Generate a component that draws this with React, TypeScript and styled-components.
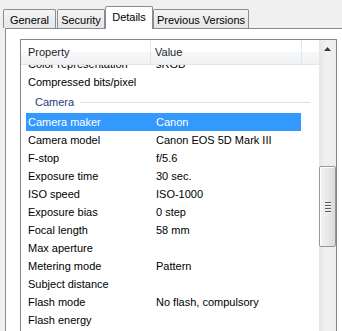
import React from 'react';
import styled, { createGlobalStyle } from 'styled-components';

const Global = createGlobalStyle`
  html, body { margin: 0; padding: 0; background: #f0f0f0; overflow: hidden; }
  body { font-family: "Liberation Sans", Arial, sans-serif; font-size: 11px; color: #000; }
`;

const Window = styled.div`
  width: 342px;
  height: 331px;
  overflow: hidden;
  display: flex;
  flex-direction: column;
`;

const TabStrip = styled.div`
  display: flex;
  align-items: flex-end;
  height: 28px;
  padding-left: 3px;
  position: relative;
  z-index: 1;
`;

const Tab = styled.div<{ $w: number; $active?: boolean }>`
  box-sizing: border-box;
  width: ${(p) => p.$w}px;
  height: ${(p) => (p.$active ? 23 : 19)}px;
  margin-left: ${(p) => (p.$active ? -1 : 0)}px;
  margin-right: ${(p) => (p.$active ? 0 : 1)}px;
  margin-bottom: ${(p) => (p.$active ? -1 : 0)}px;
  border: 1px solid #898c95;
  border-bottom: none;
  border-radius: 2px 2px 0 0;
  background: ${(p) => (p.$active ? '#ffffff' : 'linear-gradient(#f4f4f4, #e6e6e6)')};
  display: flex;
  align-items: center;
  justify-content: center;
  padding-top: ${(p) => (p.$active ? 0 : 1)}px;
  padding-bottom: ${(p) => (p.$active ? 3 : 0)}px;
  color: #000;
  white-space: nowrap;
`;

const Panel = styled.div`
  flex: 1;
  margin-left: 5px;
  border-top: 1px solid #898c95;
  border-left: 1px solid #898c95;
  background: #ffffff;
  padding: 10px 0 0 14px;
  display: flex;
  min-height: 0;
`;

const ListBox = styled.div`
  box-sizing: border-box;
  width: 317px;
  border: 1px solid #828790;
  border-bottom: none;
  background: #fff;
  display: flex;
  min-height: 0;
`;

const Content = styled.div`
  flex: 1;
  display: flex;
  flex-direction: column;
  min-width: 0;
`;

const Header = styled.div`
  display: flex;
  height: 24px;
  border-bottom: 1px solid #e5e5e5;
  background: linear-gradient(#ffffff 0%, #ffffff 50%, #f7f8fa 51%, #f1f2f4 100%);
`;

const HeadCell = styled.div<{ $w?: number; $pad?: number }>`
  box-sizing: border-box;
  ${(p) => (p.$w ? `width: ${p.$w}px;` : 'flex: 1;')}
  padding-left: ${(p) => p.$pad ?? 0}px;
  border-right: ${(p) => (p.$w ? '1px solid #e3e6ea' : 'none')};
  display: flex;
  align-items: center;
  color: #1e1e1e;
`;

const Body = styled.div`
  flex: 1;
  overflow: hidden;
`;

const Scrolled = styled.div<{ $offset: number }>`
  margin-top: ${(p) => -p.$offset}px;
  display: flex;
  flex-direction: column;
`;

const Row = styled.div<{ $selected?: boolean }>`
  display: flex;
  height: 18px;
  margin-left: 5px;
  width: 275px;
  align-items: center;
  background: ${(p) => (p.$selected ? '#3399ff' : 'transparent')};
  color: ${(p) => (p.$selected ? '#ffffff' : '#000000')};
  white-space: nowrap;
`;

const NameCell = styled.div`
  width: 125px;
  padding-left: 2px;
  box-sizing: border-box;
`;

const ValueCell = styled.div`
  flex: 1;
  padding-left: 5px;
`;

const Group = styled.div`
  height: 22px;
  display: flex;
  align-items: center;
  padding-left: 14px;
  padding-right: 9px;
  gap: 6px;
  color: #1e3a80;
`;

const GroupLine = styled.div`
  flex: 1;
  height: 1px;
  background: #dcdfe4;
  margin-top: 1px;
`;

const ScrollBar = styled.div`
  width: 17px;
  display: flex;
  flex-direction: column;
  background: linear-gradient(90deg, #e6e6e6, #f1f1f1 40%, #ececec);
`;

const ArrowButton = styled.div`
  height: 17px;
  display: flex;
  align-items: center;
  justify-content: center;
`;

const TrackGap = styled.div<{ $h: number }>`
  height: ${(p) => p.$h}px;
`;

const Thumb = styled.div`
  box-sizing: border-box;
  height: 81px;
  border: 1px solid #979797;
  border-radius: 2px;
  background: linear-gradient(90deg, #f3f3f3, #e9e9e9 50%, #d9d9d9);
  box-shadow: inset 1px 1px 0 #fff;
  display: flex;
  align-items: center;
  justify-content: center;
`;

const Grip = styled.div`
  display: flex;
  flex-direction: column;
  gap: 2px;
`;

const GripLine = styled.div`
  width: 6px;
  height: 1px;
  background: #5a5a5a;
  box-shadow: 0 1px 0 #f5f5f5;
`;

type Item = { name: string; value?: string; selected?: boolean };

const before: Item[] = [
  { name: 'Color representation', value: 'sRGB' },
  { name: 'Compressed bits/pixel' },
];

const camera: Item[] = [
  { name: 'Camera maker', value: 'Canon', selected: true },
  { name: 'Camera model', value: 'Canon EOS 5D Mark III' },
  { name: 'F-stop', value: 'f/5.6' },
  { name: 'Exposure time', value: '30 sec.' },
  { name: 'ISO speed', value: 'ISO-1000' },
  { name: 'Exposure bias', value: '0 step' },
  { name: 'Focal length', value: '58 mm' },
  { name: 'Max aperture' },
  { name: 'Metering mode', value: 'Pattern' },
  { name: 'Subject distance' },
  { name: 'Flash mode', value: 'No flash, compulsory' },
  { name: 'Flash energy' },
];

const PropRow = ({ item }: { item: Item }) => (
  <Row $selected={item.selected}>
    <NameCell>{item.name}</NameCell>
    <ValueCell>{item.value ?? ''}</ValueCell>
  </Row>
);

export default function App() {
  return (
    <Window>
      <Global />
      <TabStrip>
        <Tab $w={53}>General</Tab>
        <Tab $w={48}>Security</Tab>
        <Tab $w={48} $active>
          Details
        </Tab>
        <Tab $w={96}>Previous Versions</Tab>
      </TabStrip>
      <Panel>
        <ListBox>
          <Content>
            <Header>
              <HeadCell $w={130} $pad={7}>
                Property
              </HeadCell>
              <HeadCell $w={151} $pad={4}>
                Value
              </HeadCell>
              <HeadCell />
            </Header>
            <Body>
              <Scrolled $offset={10}>
                {before.map((it) => (
                  <PropRow key={it.name} item={it} />
                ))}
                <Group>
                  <span>Camera</span>
                  <GroupLine />
                </Group>
                {camera.map((it) => (
                  <PropRow key={it.name} item={it} />
                ))}
              </Scrolled>
            </Body>
          </Content>
          <ScrollBar>
            <ArrowButton>
              <svg width="7" height="4" viewBox="0 0 7 4">
                <path d="M0 4 L3.5 0 L7 4 Z" fill="#3a3a3a" />
              </svg>
            </ArrowButton>
            <TrackGap $h={109} />
            <Thumb>
              <Grip>
                <GripLine />
                <GripLine />
                <GripLine />
                <GripLine />
              </Grip>
            </Thumb>
          </ScrollBar>
        </ListBox>
      </Panel>
    </Window>
  );
}
